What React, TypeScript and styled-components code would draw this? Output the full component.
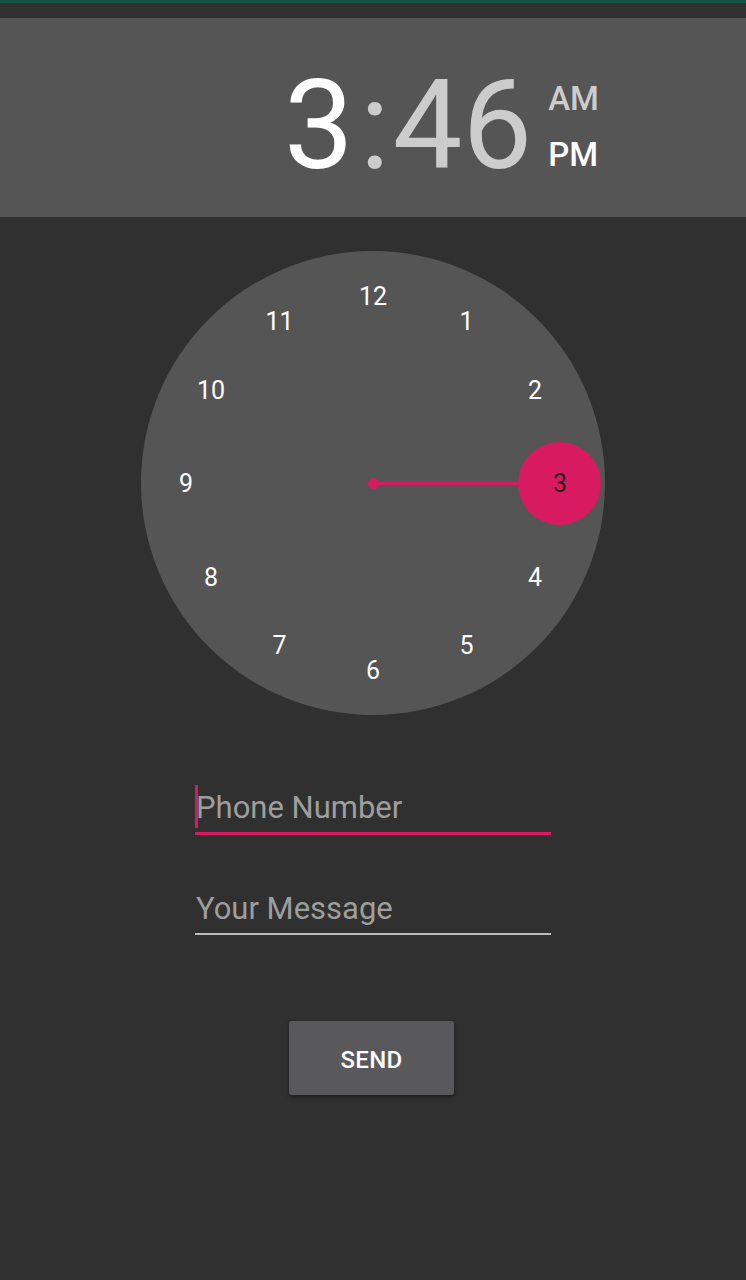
import React from "react";
import styled, { createGlobalStyle } from "styled-components";

const Global = createGlobalStyle`
  html, body { margin: 0; padding: 0; background: #303030; }
  body { font-family: Roboto, "Noto Sans", Arial, sans-serif; }
`;

const PINK = "#d81b60";

const Page = styled.div`
  width: 746px;
  height: 1280px;
  background: #303030;
  display: flex;
  flex-direction: column;
  overflow: hidden;
`;

const StatusBar = styled.div`
  height: 18px;
  background: #303030;
  border-top: 3px solid #175447;
  box-sizing: border-box;
`;

const Header = styled.header`
  height: 199px;
  background: #555555;
  display: flex;
  align-items: center;
  padding-left: 284px;
  box-sizing: border-box;
`;

const Time = styled.div`
  display: flex;
  align-items: baseline;
  font-size: 124px;
  line-height: 1;
  font-weight: 400;
  margin-top: 16px;
`;

const Digit = styled.span<{ $active?: boolean }>`
  color: ${(p) => (p.$active ? "#ffffff" : "#cccccc")};
`;

const Colon = styled.span`
  color: #cccccc;
  margin: 0 3px 0 6px;
`;

const Meridiem = styled.div`
  display: flex;
  flex-direction: column;
  margin-left: 16px;
  gap: 16px;
  margin-top: 18px;
`;

const MeridiemLabel = styled.span<{ $active?: boolean }>`
  font-size: 33px;
  font-weight: 500;
  line-height: 1.2;
  color: ${(p) => (p.$active ? "#ffffff" : "#cccccc")};
`;

const Body = styled.main`
  display: flex;
  flex-direction: column;
  align-items: center;
  padding-top: 34px;
`;

const Dial = styled.div`
  position: relative;
  width: 464px;
  height: 464px;
  border-radius: 50%;
  background: #555555;
`;

const Num = styled.span<{ $selected?: boolean }>`
  position: absolute;
  transform: translate(-50%, -50%);
  font-size: 25px;
  line-height: 1;
  color: ${(p) => (p.$selected ? "#2a1a22" : "#ffffff")};
  z-index: 2;
`;

const Hand = styled.div`
  position: absolute;
  left: 232px;
  top: 231px;
  width: 150px;
  height: 3px;
  background: ${PINK};
`;

const CenterDot = styled.div`
  position: absolute;
  left: 227px;
  top: 227px;
  width: 11px;
  height: 11px;
  border-radius: 50%;
  background: ${PINK};
`;

const Selector = styled.div`
  position: absolute;
  left: 377px;
  top: 191px;
  width: 83px;
  height: 83px;
  border-radius: 50%;
  background: ${PINK};
`;

const Form = styled.div`
  width: 356px;
  display: flex;
  flex-direction: column;
  margin-top: 66px;
  gap: 49px;
`;

const Field = styled.div<{ $focused?: boolean }>`
  position: relative;
  height: ${(p) => (p.$focused ? "51px" : "49px")};
  border-bottom: ${(p) => (p.$focused ? `3px solid ${PINK}` : "2px solid #bdbdbd")};
  display: flex;
  align-items: flex-end;
`;

const Placeholder = styled.span`
  font-size: 31px;
  color: #9e9e9e;
  line-height: 1;
  padding-bottom: 9px;
  padding-left: 1px;
`;

const Caret = styled.span`
  position: absolute;
  left: 0;
  top: 4px;
  width: 3px;
  height: 43px;
  background: ${PINK};
`;

const Send = styled.button`
  margin-top: 86px;
  margin-right: 3px;
  width: 165px;
  height: 74px;
  border: none;
  border-radius: 3px;
  background: #59595b;
  color: #ffffff;
  font-family: Roboto, sans-serif;
  font-size: 24px;
  font-weight: 500;
  letter-spacing: 0.3px;
  padding-top: 4px;
  box-shadow: 0 2px 4px rgba(0, 0, 0, 0.4);
`;

const numbers = [12, 1, 2, 3, 4, 5, 6, 7, 8, 9, 10, 11];

export default function App() {
  const cx = 232;
  const cy = 232;
  const r = 187;
  return (
    <Page>
      <Global />
      <StatusBar />
      <Header>
        <Time>
          <Digit $active>3</Digit>
          <Colon>:</Colon>
          <Digit>46</Digit>
        </Time>
        <Meridiem>
          <MeridiemLabel>AM</MeridiemLabel>
          <MeridiemLabel $active>PM</MeridiemLabel>
        </Meridiem>
      </Header>
      <Body>
        <Dial>
          <Hand />
          <CenterDot />
          <Selector />
          {numbers.map((n, i) => {
            const a = (i * Math.PI) / 6;
            const x = cx + r * Math.sin(a);
            const y = cy - r * Math.cos(a);
            return (
              <Num key={n} $selected={n === 3} style={{ left: x, top: y }}>
                {n}
              </Num>
            );
          })}
        </Dial>
        <Form>
          <Field $focused>
            <Caret />
            <Placeholder>Phone Number</Placeholder>
          </Field>
          <Field>
            <Placeholder>Your Message</Placeholder>
          </Field>
        </Form>
        <Send>SEND</Send>
      </Body>
    </Page>
  );
}
